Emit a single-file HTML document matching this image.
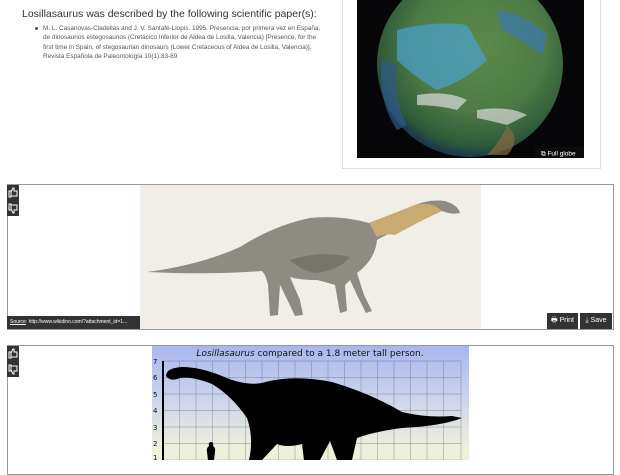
<!DOCTYPE html>
<html><head><meta charset="utf-8"><style>
*{margin:0;padding:0;box-sizing:border-box}
body{width:620px;height:460px;overflow:hidden;background:#fff;font-family:"Liberation Sans",Arial,sans-serif;position:relative}
.a{position:absolute}
h3{position:absolute;left:22px;top:8px;font-size:10.5px;font-weight:normal;color:#333}
.ref{position:absolute;left:43px;top:24px;width:278px;font-size:6.4px;line-height:9.3px;color:#555}
.ref:before{content:"";position:absolute;left:-8px;top:3px;width:3px;height:3px;border-radius:50%;background:#555}
.panel{position:absolute;border:1px solid #999;background:#fff}
.ico{position:absolute;left:7px;width:12px;height:31px;background:#333}
.btn{position:absolute;background:#333;color:#fff;font-size:7px;line-height:16px;text-align:center}
</style></head><body>
<h3>Losillasaurus was described by the following scientific paper(s):</h3>
<div class="ref">M. L. Casanovas-Cladellas and J. V. Santafé-Llopis. 1995. Presencia, por primera vez en España, de dinosaurios estegosaurios (Cretácico Inferior de Aldea de Losilla, Valencia) [Presence, for the first time in Spain, of stegosaurian dinosaurs (Lower Cretaceous of Aldea de Losilla, Valencia)]. Revista Española de Paleontología 10(1):83-89</div>

<div class="panel" style="left:342px;top:-2px;width:259px;height:171px;border-color:#ddd"></div>
<div class="a" style="left:357px;top:0;width:227px;height:158px;background:#060608;overflow:hidden">
<svg width="227" height="158"><defs><radialGradient id="g" cx="0.55" cy="0.4" r="0.6"><stop offset="0" stop-color="#5c8a4a"/><stop offset="0.6" stop-color="#4d7a45"/><stop offset="0.9" stop-color="#2e5a3a"/><stop offset="1" stop-color="#1c3a4a"/></radialGradient></defs>
<circle cx="113" cy="64" r="93" fill="url(#g)"/>
<path d="M40 30 Q80 20 110 25 L130 60 Q110 80 80 90 Q55 75 40 60Z" fill="#4aa0c8" opacity=".75"/>
<path d="M140 10 Q170 15 190 35 L185 55 Q165 40 145 30Z" fill="#3a78b0" opacity=".7"/>
<path d="M25 60 Q20 100 40 130 L50 125 Q35 95 40 65Z" fill="#2e5a8a" opacity=".7"/>
<path d="M60 95 Q90 90 110 100 L100 110 Q80 105 60 105Z" fill="#ddd" opacity=".7"/>
<path d="M120 110 Q150 105 170 115 L150 125 Q130 120 120 118Z" fill="#eee" opacity=".6"/>
<path d="M150 125 Q165 140 150 155 L130 155 Q145 140 150 125Z" fill="#8a6a40" opacity=".7"/>
<rect x="178" y="147" width="49" height="11" fill="#111" opacity=".6"/>
<text x="184" y="155.5" font-size="6.5" fill="#fff" font-family="Liberation Sans">⧉ Full globe</text></svg></div>

<div class="panel" style="left:7px;top:184px;width:607px;height:146px"></div>
<div class="a" style="left:140px;top:185px;width:341px;height:144px;background:#f1eee8">
<svg width="341" height="144">
<path d="M7 87 Q60 80 100 62 Q135 40 170 33 Q200 30 229 38 Q255 28 275 20 Q290 14 305 16 Q318 20 320 28 Q312 30 302 26 Q285 32 265 42 Q245 50 237 55 Q235 75 217 88 L224 110 L232 126 L226 128 L218 112 L210 95 L205 100 L207 126 L200 128 L195 100 Q185 97 177 95 Q160 95 150 92 L160 115 L163 130 L155 131 L145 110 L140 100 L138 130 L130 131 L128 100 Q126 90 122 86 Q70 90 7 87Z" fill="#8e8c82"/>
<path d="M229 38 Q255 28 275 20 Q292 16 302 26 Q280 36 255 50 Q245 48 237 52Z" fill="#c9aa70"/>
<path d="M150 75 Q180 65 210 72 Q200 85 175 88 Q160 85 150 75Z" fill="#6e6a5e" opacity=".7"/></svg></div>
<div class="ico" style="top:185px"><svg width="12" height="31" fill="none" stroke="#fff" stroke-width="1"><path d="M2 6h2v6H2zM4 7l2-4h1v3h3v5H4"/><path d="M2 19h2v6H2zM4 24l2 4h1v-3h3v-5H4"/></svg></div>
<div class="a" style="left:7px;top:316px;width:133px;height:13px;background:#333;color:#fff;font-size:5px;line-height:13px;padding-left:3px;white-space:nowrap"><u>Source</u>: http://www.wikidino.com/?attachment_id=1...</div>
<div class="btn" style="left:547px;top:313px;width:31px">🖶 Print</div>
<div class="btn" style="left:580px;top:313px;width:32px">⤓ Save</div>

<div class="panel" style="left:7px;top:345px;width:607px;height:130px"></div>
<div class="ico" style="top:346px"><svg width="12" height="31" fill="none" stroke="#fff" stroke-width="1"><path d="M2 6h2v6H2zM4 7l2-4h1v3h3v5H4"/><path d="M2 19h2v6H2zM4 24l2 4h1v-3h3v-5H4"/></svg></div>
<div class="a" style="left:152px;top:346px;width:317px;height:114px;background:linear-gradient(#a9b6ef,#c7d0ec 40%,#eef0dc 90%)">
<svg width="317" height="114" font-family="DejaVu Sans,sans-serif">
<text x="158" y="10" font-size="9" text-anchor="middle" fill="#111"><tspan font-style="italic">Losillasaurus</tspan> compared to a 1.8 meter tall person.</text>
<g stroke="#556" stroke-width=".5" opacity=".6">
<path d="M11 15H309M11 31.5H309M11 48H309M11 64.5H309M11 81H309M11 97.5H309M11 114H309"/>
<path d="M27.5 15V114M44 15V114M60.5 15V114M77 15V114M93.5 15V114M110 15V114M126.5 15V114M143 15V114M159.5 15V114M176 15V114M192.5 15V114M209 15V114M225.5 15V114M242 15V114M258.5 15V114M275 15V114M291.5 15V114M309 15V114"/></g>
<rect x="10" y="15" width="2" height="99" fill="#000"/>
<g font-size="7" fill="#111"><text x="1" y="18">7</text><text x="1" y="34">6</text><text x="1" y="51">5</text><text x="1" y="67">4</text><text x="1" y="84">3</text><text x="1" y="100">2</text><text x="1" y="114">1</text></g>
<path d="M14 30 Q14 22 30 21 Q48 21 70 30 Q92 40 110 37 Q140 28 180 36 Q220 48 250 66 Q275 72 300 70 L310 72 Q290 80 250 82 Q220 86 205 92 L200 114 L185 114 L178 95 L168 114 L152 114 L150 98 Q135 102 125 98 L110 114 L97 114 Q102 92 95 72 Q80 50 60 38 Q40 30 28 32 Q18 36 14 30Z" fill="#000"/>
<path d="M56 114 L55 106 Q54 102 57 100 Q56 96 59 96 Q62 96 61 100 Q64 102 63 106 L62 114Z" fill="#000"/></svg></div>
</body></html>
